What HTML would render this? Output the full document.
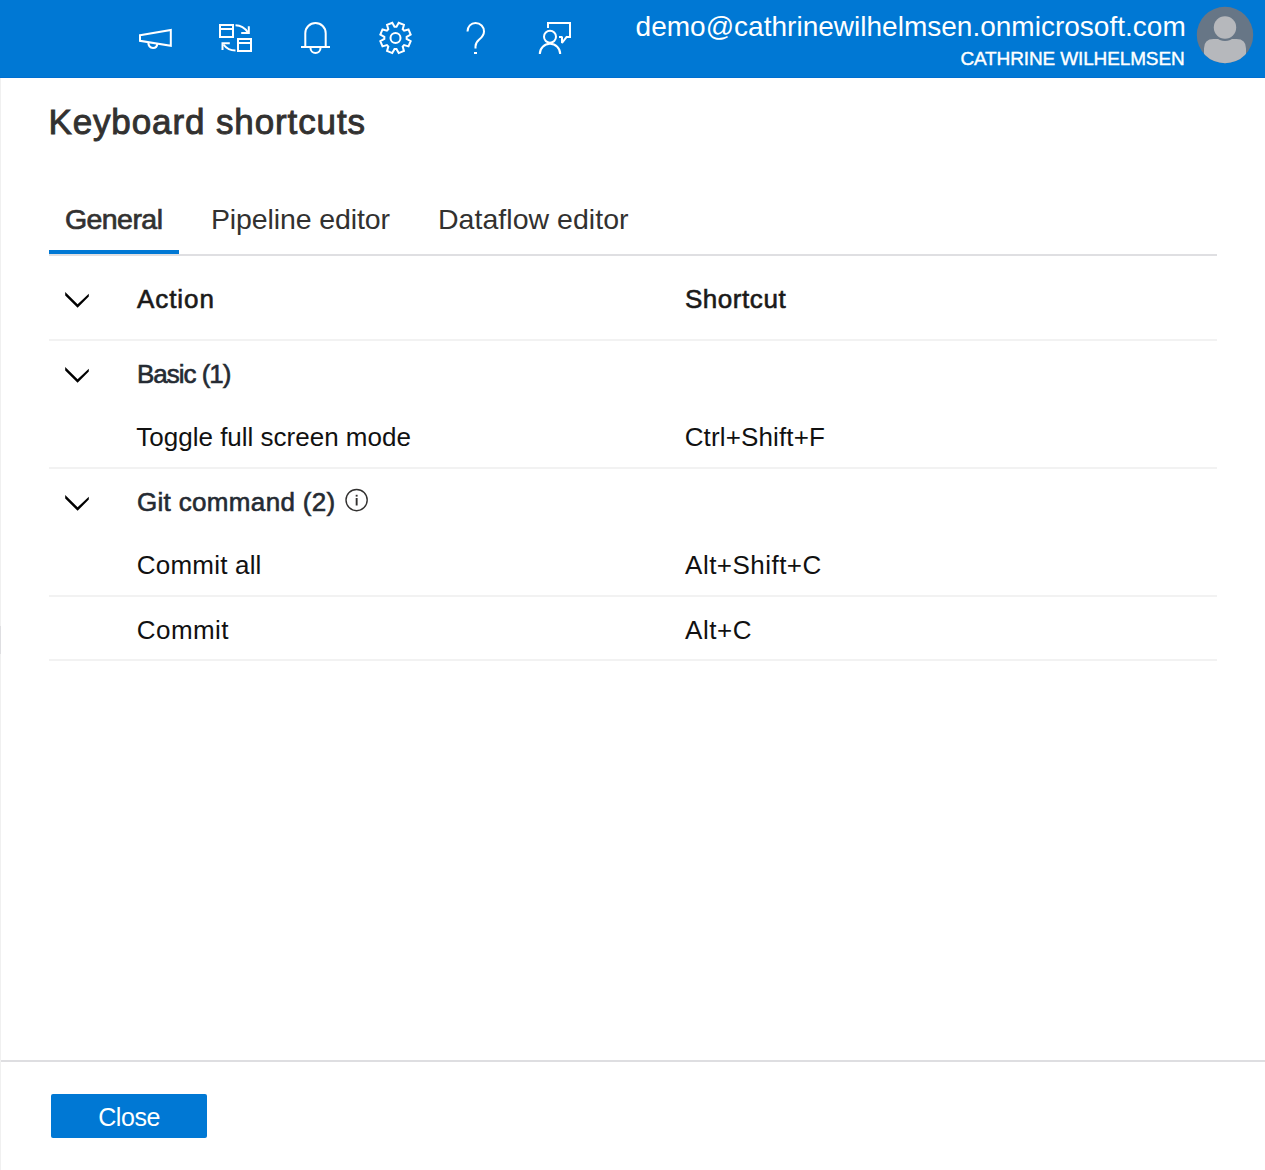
<!DOCTYPE html>
<html>
<head>
<meta charset="utf-8">
<style>
html,body{margin:0;padding:0;}
body{width:1265px;height:1170px;overflow:hidden;background:#fff;position:relative;font-family:"Liberation Sans",sans-serif;}
.abs{position:absolute;}
.t{position:absolute;white-space:nowrap;line-height:1;}
.line{position:absolute;left:49px;width:1168px;height:2px;background:#f2f2f2;}
</style>
</head>
<body>
<div class="abs" style="left:0;top:0;width:1265px;height:78px;background:#0078d4;"></div>
<div class="abs" style="left:0;top:78px;width:1px;height:1092px;background:#f0f0f0;"></div>
<div class="abs" style="left:0;top:626px;width:1px;height:28px;background:#dedee1;"></div>
<div class="abs" style="left:0;top:77px;width:1265px;height:1px;background:#006fd0;"></div>

<svg class="abs" style="left:0;top:0" width="620" height="78" viewBox="0 0 620 78">
 <g fill="none" stroke="#fff" stroke-width="2">
  <path d="M140,35.2 L170.8,30 L170.8,45.8 L140,40.8 Z" stroke-linejoin="miter"/>
  <path d="M148.3,42.1 C148.3,46 150.5,47.9 153,47.9 C155.5,47.9 157.2,46.2 157.3,43.6"/>
  <rect x="220" y="25" width="13" height="12"/>
  <line x1="220" y1="29" x2="233" y2="29"/>
  <rect x="238" y="39" width="13" height="12"/>
  <line x1="238" y1="43" x2="251" y2="43"/>
  <path d="M235.5,25.2 C240.5,25.2 245,28 248,32.5"/>
  <path d="M248.8,26.2 L248.8,33 L241.2,33"/>
  <path d="M235.5,50.5 C230.5,50.5 226,48 223.5,44.5"/>
  <path d="M222.5,50 L222.5,43.2 L229.8,43.2"/>
  <path d="M305.3,47 L305.3,33.2 A10.2,10.2 0 0 1 325.7,33.2 L325.7,47"/>
  <line x1="301" y1="47" x2="330" y2="47"/>
  <path d="M310.5,46 L310.5,48 A5,5 0 0 0 320.5,48 L320.5,46"/>
  <path d="M396.48,26.74 L398.72,22.74 L403.94,24.90 L402.70,29.32 L404.08,30.70 L408.50,29.46 L410.66,34.68 L406.66,36.92 L406.66,38.88 L410.66,41.12 L408.50,46.34 L404.08,45.10 L402.70,46.48 L403.94,50.90 L398.72,53.06 L396.48,49.06 L394.52,49.06 L392.28,53.06 L387.06,50.90 L388.30,46.48 L386.92,45.10 L382.50,46.34 L380.34,41.12 L384.34,38.88 L384.34,36.92 L380.34,34.68 L382.50,29.46 L386.92,30.70 L388.30,29.32 L387.06,24.90 L392.28,22.74 L394.52,26.74 Z" stroke-linejoin="miter"/>
  <circle cx="395.5" cy="37.9" r="5"/>
  <path d="M467.5,31.5 C467.5,26.5 471,23 475.5,23 C480.5,23 484,26.8 484,31.5 C484,35.3 481.8,37.4 479.2,39.6 C476.6,41.8 475.5,43.5 475.5,46.5 L475.5,48.5"/>
  <path d="M548,28 L548,23 L570,23 L570,37 L566,37"/><path d="M567,36.3 L562,43 L562,37 L559,37" stroke-linejoin="bevel"/>
  <circle cx="550" cy="36.8" r="6"/>
  <path d="M539.8,54 A10.2,10.2 0 0 1 560.2,54"/>
 </g>
 <rect x="474" y="52" width="3" height="2" fill="#fff"/>
</svg>

<svg class="abs" style="left:1196px;top:6px" width="58" height="58" viewBox="1196 6 58 58">
 <defs><clipPath id="cc"><circle cx="1225" cy="35" r="28.2"/></clipPath></defs>
 <circle cx="1225" cy="35" r="28.2" fill="#677686"/>
 <g clip-path="url(#cc)">
  <path d="M1204,70 L1204,48.5 Q1204,39 1213.5,39 L1236.5,39 Q1246,39 1246,48.5 L1246,70 Z" fill="#b6b8bc"/>
  <circle cx="1225" cy="27.5" r="13.4" fill="#677686"/>
  <circle cx="1225" cy="27.5" r="11.2" fill="#b6b8bc"/>
 </g>
</svg>
<div class="t" style="left:635.6px;top:13.0px;font-size:28px;font-weight:400;letter-spacing:0.01px;color:#fff;">demo@cathrinewilhelmsen.onmicrosoft.com</div>
<div class="t" style="left:960.4px;top:49.0px;font-size:19px;font-weight:400;letter-spacing:-0.13px;color:#fff;-webkit-text-stroke:0.4px #fff;">CATHRINE WILHELMSEN</div>
<div class="t" style="left:48.4px;top:104.0px;font-size:35px;font-weight:400;letter-spacing:0.89px;color:#323130;-webkit-text-stroke:0.9px #323130;">Keyboard shortcuts</div>
<div class="t" style="left:64.9px;top:205.0px;font-size:28.5px;font-weight:400;letter-spacing:-0.55px;color:#323130;-webkit-text-stroke:0.7px #323130;">General</div>
<div class="t" style="left:210.9px;top:205.1px;font-size:28.5px;font-weight:400;letter-spacing:-0.11px;color:#323130;">Pipeline editor</div>
<div class="t" style="left:438.0px;top:204.5px;font-size:28.5px;font-weight:400;letter-spacing:0.03px;color:#323130;">Dataflow editor</div>
<div class="abs" style="left:49px;top:254px;width:1168px;height:2px;background:#dfdfe2;"></div>
<div class="abs" style="left:49px;top:250px;width:130px;height:4px;background:#0078d4;"></div>
<svg class="abs" style="left:60px;top:284px" width="34" height="30" viewBox="60 284 34 30"><path d="M65.20,291.90 L77.60,304.20 L88.80,293.70 L88.80,296.40 L77.60,307.80 L65.20,295.50 Z" fill="#000"/></svg>
<div class="t" style="left:137.1px;top:286.0px;font-size:26px;font-weight:400;letter-spacing:0.9px;color:#1b1a19;-webkit-text-stroke:0.6px #1b1a19;">Action</div>
<div class="t" style="left:684.9px;top:286.0px;font-size:26px;font-weight:400;letter-spacing:0.56px;color:#1b1a19;-webkit-text-stroke:0.6px #1b1a19;">Shortcut</div>
<div class="line" style="top:339px"></div>
<svg class="abs" style="left:60px;top:359px" width="34" height="30" viewBox="60 359 34 30"><path d="M65.20,366.90 L77.60,379.20 L88.80,368.70 L88.80,371.40 L77.60,382.80 L65.20,370.50 Z" fill="#000"/></svg>
<div class="t" style="left:137.0px;top:361.0px;font-size:26px;font-weight:400;letter-spacing:-1.02px;color:#252b33;-webkit-text-stroke:0.6px #252b33;">Basic (1)</div>
<div class="t" style="left:136.3px;top:424.0px;font-size:26px;font-weight:400;letter-spacing:-0.0px;color:#111;">Toggle full screen mode</div>
<div class="t" style="left:684.7px;top:424.0px;font-size:26px;font-weight:400;letter-spacing:0.14px;color:#111;">Ctrl+Shift+F</div>
<div class="line" style="top:467px"></div>
<svg class="abs" style="left:60px;top:487px" width="34" height="30" viewBox="60 487 34 30"><path d="M65.20,494.90 L77.60,507.20 L88.80,496.70 L88.80,499.40 L77.60,510.80 L65.20,498.50 Z" fill="#000"/></svg>
<div class="t" style="left:136.9px;top:489.0px;font-size:26px;font-weight:400;letter-spacing:0.34px;color:#252b33;-webkit-text-stroke:0.6px #252b33;">Git command (2)</div>

<svg class="abs" style="left:340px;top:484px" width="34" height="34" viewBox="340 484 34 34">
 <circle cx="356.6" cy="500.1" r="10.6" fill="none" stroke="#323130" stroke-width="1.4"/>
 <rect x="355.7" y="498" width="1.9" height="7.5" fill="#323130"/>
 <rect x="355.7" y="494.8" width="1.9" height="1.8" fill="#323130"/>
</svg>
<div class="t" style="left:136.8px;top:552.0px;font-size:26px;font-weight:400;letter-spacing:0.2px;color:#111;">Commit all</div>
<div class="t" style="left:685.1px;top:552.0px;font-size:26px;font-weight:400;letter-spacing:0.47px;color:#111;">Alt+Shift+C</div>
<div class="line" style="top:595px"></div>
<div class="t" style="left:136.8px;top:617.0px;font-size:26px;font-weight:400;letter-spacing:0.44px;color:#111;">Commit</div>
<div class="t" style="left:685.0px;top:617.0px;font-size:26px;font-weight:400;letter-spacing:0.55px;color:#111;">Alt+C</div>
<div class="line" style="top:659px"></div>
<div class="abs" style="left:1px;top:1060px;width:1264px;height:2px;background:#dedee1;"></div>
<div class="abs" style="left:51px;top:1094px;width:156px;height:44px;background:#0078d4;border-radius:2px;"></div>
<div class="t" style="left:98.2px;top:1105.0px;font-size:25px;font-weight:400;letter-spacing:-0.4px;color:#fff;">Close</div>
</body>
</html>
